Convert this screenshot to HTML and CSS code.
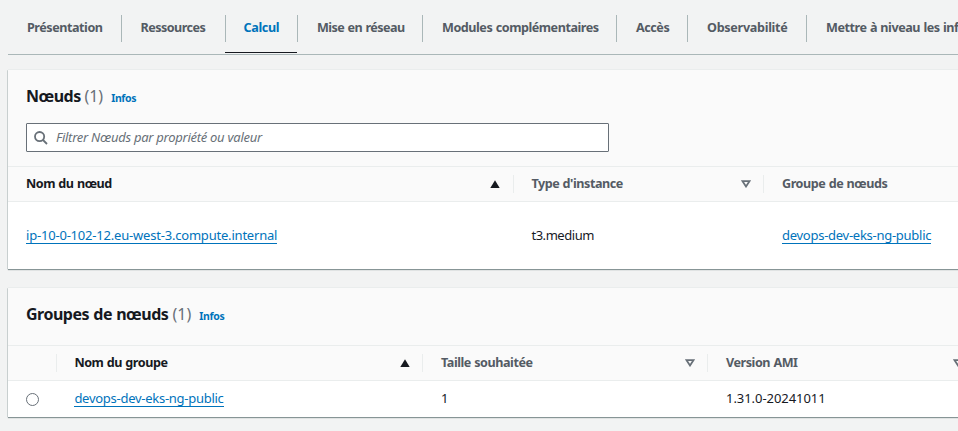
FILE: index.html
```html
<!DOCTYPE html>
<html lang="fr">
<head>
<meta charset="utf-8">
<title>Calcul</title>
<link rel="stylesheet" href="styles.css">
</head>
<body>
<nav class="tabs">
<a class="tab t1"><span>Présentation</span></a><a class="tab t2"><span>Ressources</span></a><a class="tab t3 active"><span>Calcul</span></a><a class="tab t4"><span>Mise en réseau</span></a><a class="tab t5"><span>Modules complémentaires</span></a><a class="tab t6"><span>Accès</span></a><a class="tab t7"><span>Observabilité</span></a><a class="tab t8"><span>Mettre à niveau les inf</span></a>
</nav>
<section class="panel nodes">
<header class="head"><h2>Nœuds <span class="count">(1)</span></h2><a class="info">Infos</a></header>
<div class="tools"><div class="search"><svg class="glass" width="14" height="14" viewBox="0 0 14 14"><circle cx="5.6" cy="5.6" r="4.6"/><path d="M9 9l4 4"/></svg><span>Filtrer Nœuds par propriété ou valeur</span></div></div>
<div class="row th"><div class="cell sorted"><b>Nom du nœud</b><svg class="up" width="10" height="8"><path d="M5 .3L9.7 8H.3z"/></svg></div><div class="cell"><b>Type d'instance</b><svg class="down" width="10" height="8"><path d="M1.5 1.2h7L5 6.5z"/></svg></div><div class="cell"><b>Groupe de nœuds</b></div></div>
<div class="row td"><div class="cell"><a class="link l1">ip-10-0-102-12.eu-west-3.compute.internal</a></div><div class="cell"><span class="type">t3.medium</span></div><div class="cell"><a class="link l2">devops-dev-eks-ng-public</a></div></div>
</section>
<section class="panel groups">
<header class="head"><h2>Groupes de nœuds <span class="count">(1)</span></h2><a class="info">Infos</a></header>
<div class="row th"><div class="cell"></div><div class="cell sorted"><b>Nom du groupe</b><svg class="up" width="10" height="8"><path d="M5 .3L9.7 8H.3z"/></svg></div><div class="cell"><b>Taille souhaitée</b><svg class="down" width="10" height="8"><path d="M1.5 1.2h7L5 6.5z"/></svg></div><div class="cell last"><b>Version AMI</b><svg class="down" width="10" height="8"><path d="M1.5 1.2h7L5 6.5z"/></svg></div></div>
<div class="row td"><div class="cell"><i class="radio"></i></div><div class="cell"><a class="link l2">devops-dev-eks-ng-public</a></div><div class="cell"><span>1</span></div><div class="cell"><span class="version">1.31.0-20241011</span></div></div>
</section>
</body>
</html>
```

FILE: styles.css
```css
* { box-sizing: border-box; }
body { margin: 0; height: 431px; overflow: hidden; background: #f2f3f3; color: #16191f; font: 13px/20px "Noto Sans", sans-serif; letter-spacing: -0.27px; }
.tabs { height: 55px; margin-left: 8px; border-bottom: 1px solid #aab7b8; display: flex; overflow: hidden; white-space: nowrap; }
.tab { flex: none; height: 53px; padding: 18px 0 0 19px; font-size: 12.6px; font-weight: 700; letter-spacing: -0.46px; word-spacing: 0.6px; color: #545b64; position: relative; }
.tab + .tab::before { content: ""; position: absolute; left: 0; top: 15px; height: 27px; border-left: 1px solid #aab7b8; }
.t1 { width: 113px; }
.t2 { width: 104px; padding-left: 19.6px; letter-spacing: -0.56px; }
.t3 { width: 72px; padding-left: 18.5px; letter-spacing: -0.35px; }
.t4 { width: 125px; padding-left: 20px; letter-spacing: -0.55px; }
.t5 { width: 194px; padding-left: 20px; }
.t6 { width: 71px; padding-left: 20px; }
.t7 { width: 119px; padding-left: 20px; letter-spacing: -0.3px; }
.t8 { width: 143px; padding-left: 20px; letter-spacing: -0.46px; }
.active { color: #0073bb; }
.active::after { content: ""; position: absolute; left: 0; right: 0; bottom: 0; height: 1px; background: #16191f; }
.panel { margin-left: 8px; background: #fff; box-shadow: 0 1px 1px #879596, -1px 0 0 #d5dbdb, 0 -1px 0 #eaeded; }
.nodes { margin-top: 15px; height: 199px; }
.groups { margin-top: 19px; height: 129px; }
.head { background: #fafafa; display: flex; padding: 14px 18px 0; }
.nodes .head { height: 53px; }
.groups .head { height: 57px; }
h2 { margin: 0; font-size: 16px; line-height: 24px; font-weight: 700; letter-spacing: -0.5px; }
.groups h2 { word-spacing: 0.6px; }
.count { font-weight: 400; letter-spacing: 0; color: #687078; }
.info { margin: 6px 0 0 8px; color: #0073bb; font-size: 10.5px; font-weight: 700; line-height: 16px; letter-spacing: -0.35px; }
.tools { background: #fafafa; padding: 0 0 14px 18px; }
.search { width: 583px; height: 29px; padding-left: 7px; gap: 8px; border: 1px solid #687078; border-radius: 1px; display: flex; align-items: center; background: #fff; color: #687078; font-style: italic; }
.search span { padding-bottom: 2px; }
.glass { fill: none; stroke: #687078; stroke-width: 1.8; }
.row { display: grid; }
.nodes .row { grid-template-columns: 505px 250px 1fr; }
.groups .row { grid-template-columns: 48px 366px 285px 1fr; }
.cell { display: flex; align-items: center; padding-left: 18.4px; position: relative; }
.cell:first-child { padding-left: 18px; }
.cell:nth-child(n+3) { padding-left: 19px; }
.th { height: 36px; background: #fafafa; border: 1px solid #eaeded; border-width: 1px 0; }
.th .cell { justify-content: space-between; padding-right: 12px; color: #545b64; }
.th .cell.sorted:first-child { padding-right: 13px; }
.th .sorted { color: #16191f; }
.th .cell + .cell::before { content: ""; position: absolute; left: 0; top: 8px; height: 18px; border-left: 1px solid #eaeded; }
.th .cell.last { padding-right: 0; margin-right: -5px; overflow: hidden; }
b { font-size: 12.6px; font-weight: 700; letter-spacing: -0.45px; word-spacing: 0.5px; }
svg { flex: none; }
.up { fill: #16191f; }
.down { fill: none; stroke: #687078; stroke-width: 1.8; }
.nodes .td { height: 67px; }
.groups .td { height: 36px; }
.td span { padding-bottom: 2px; }
.link { color: #0073bb; line-height: 16px; border-bottom: 1px solid #0073bb; }
.l1 { letter-spacing: -0.2px; }
.l2 { letter-spacing: -0.27px; }
.groups .link { margin-bottom: 2px; }
.type { letter-spacing: -0.45px; }
.version { letter-spacing: -0.05px; }
.radio { width: 13px; height: 13px; border: 1px solid #687078; border-radius: 50%; }
```
